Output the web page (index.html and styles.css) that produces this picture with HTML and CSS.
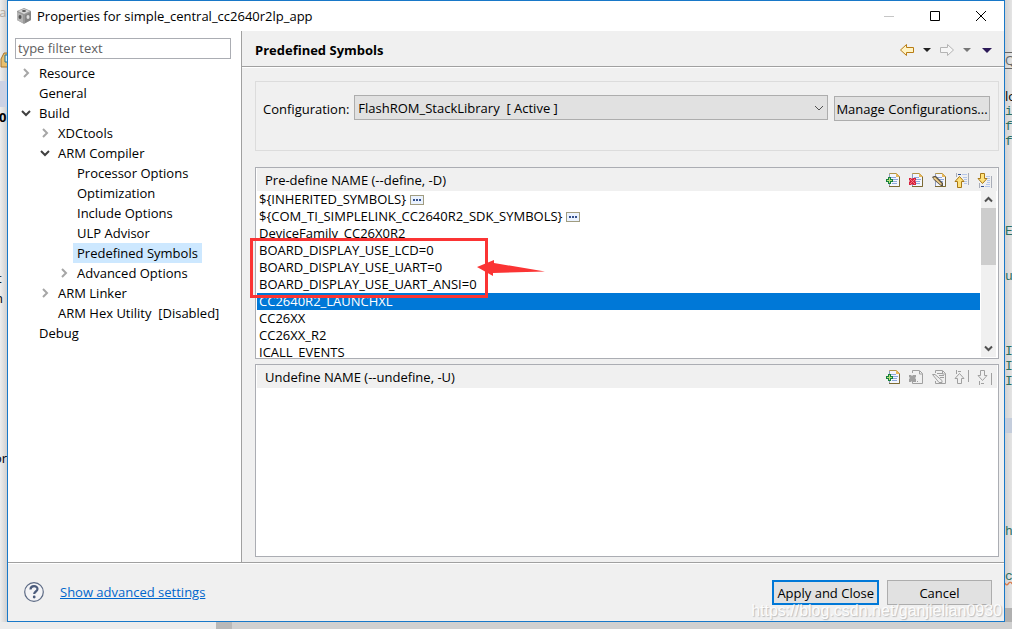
FILE: index.html
```
<!DOCTYPE html>
<html lang="en">
<head>
<meta charset="utf-8">
<title>Properties for simple_central_cc2640r2lp_app</title>
<link rel="stylesheet" href="styles.css">
</head>
<body>
<svg class="defs" aria-hidden="true">
  <defs>
    <symbol id="page" viewBox="0 0 16 16">
      <path d="M4.500 1.500h7l3 3v10h-10z" fill="#f4f6fc" stroke="#b09448"/>
      <path d="M4 14.500h10.500v-10" fill="none" stroke="#7b6a34"/>
      <path d="M4.500 2v12" stroke="#8f9cc0"/>
      <path d="M11 1v4h4z" fill="#e8b85c"/>
      <path d="M6 5.500h5M7 7.500h6M6 9.500h6M7 11.500h5" stroke="#8ea8dc"/>
    </symbol>
    <symbol id="page-off" viewBox="0 0 16 16">
      <path d="M4.500 4v-2.500h7l3 3v10h-10v-2.500M11.500 2v3h3" fill="none" stroke="#a0a0a0"/>
    </symbol>
    <symbol id="add" viewBox="0 0 16 16">
      <use href="#page"/>
      <path d="M3 5h3v2h2v3h-2v2h-3v-2h-2v-3h2z" fill="#16803c"/>
      <path d="M4.500 6v5M2 8.500h5" stroke="#b5e07c"/>
    </symbol>
    <symbol id="delete" viewBox="0 0 16 16">
      <use href="#page"/>
      <path d="M1 6h2l1 1 1-1h3v2l-1 1 1 1v3h-3l-1-1-1 1h-2v-3l1-1-1-1z" fill="#d8203c"/>
      <path d="M2 7l5 5M7 7l-5 5" stroke="#f47884"/>
    </symbol>
    <symbol id="edit" viewBox="0 0 16 16">
      <use href="#page"/>
      <path d="M1 5l2-1h2l7 7v3h-2l-7-6z" fill="#5c5444"/>
      <path d="M2 6l2-1 7 7-1 1z" fill="#f0cf8c"/>
    </symbol>
    <symbol id="up" viewBox="0 0 16 16">
      <path d="M2.500 1v4M14.500 1v12" stroke="#a9adb8"/>
      <path d="M4 2.500h3" stroke="#304c90"/>
      <path d="M8 2.500h5M9 5.500h4M10 7.500h3M10 9.500h3M10 11.500h3" stroke="#b4c6ea"/>
      <path d="M5.500 4.500l4.500 5h-2.500v6h-4v-6h-2.500z" fill="#ffe27c" stroke="#a97816"/>
    </symbol>
    <symbol id="down" viewBox="0 0 16 16">
      <path d="M2.500 11v5M14.500 4v12" stroke="#a9adb8"/>
      <path d="M4 14.500h3" stroke="#304c90"/>
      <path d="M9 4.500h4M10 6.500h3M10 8.500h3M10 10.500h3M8 14.500h5M9 12.500h4" stroke="#b4c6ea"/>
      <path d="M3.500 1.500h4v5h2.500l-4.500 5-4.500-5h2.500z" fill="#ffe27c" stroke="#a97816"/>
    </symbol>
    <symbol id="delete-off" viewBox="0 0 16 16">
      <use href="#page-off"/>
      <path d="M1 6h2l1 1 1-1h3v2l-1 1 1 1v3h-3l-1-1-1 1h-2v-3l1-1-1-1z" fill="#a0a0a0"/>
      <path d="M9 12.500h1" stroke="#a0a0a0"/>
    </symbol>
    <symbol id="edit-off" viewBox="0 0 16 16">
      <use href="#page-off"/>
      <path d="M1.500 5.500h2.500l7 6v2h-3zM6 4.500h5M8 6.500h5M9 8.500h4" fill="none" stroke="#a0a0a0"/>
    </symbol>
    <symbol id="up-off" viewBox="0 0 16 16">
      <path d="M2.500 1v4M4 2.500h3M14.500 1v12M5.500 4.500l4.500 5h-2.500v5h-4v-5h-2.500z" fill="none" stroke="#a0a0a0"/>
    </symbol>
    <symbol id="down-off" viewBox="0 0 16 16">
      <path d="M2.500 12v4M4 14.500h3M14.500 4v12M3.500 1.500h4v5h2.500l-4.500 5-4.500-5h2.500z" fill="none" stroke="#a0a0a0"/>
    </symbol>
    <symbol id="closed" viewBox="0 0 12 12"><path d="M4 2l4 4-4 4" fill="none" stroke="#a6a6a6" stroke-width="2"/></symbol>
    <symbol id="open" viewBox="0 0 12 12"><path d="M2 4l4 4 4-4" fill="none" stroke="#404040" stroke-width="2"/></symbol>
    <symbol id="dots" viewBox="0 0 14 10">
      <rect x="0.500" y="0.500" width="13" height="9" fill="#eaf2fe" stroke="#a09c80"/>
      <path d="M3 5h2M6 5h2M9 5h2" stroke="#34508c" stroke-width="2"/>
    </symbol>
  </defs>
</svg>

<div class="desktop">
  <div class="behind behind-left" aria-hidden="true">
    <span class="fragment ra">ra</span>
    <svg class="fragment tool" viewBox="0 0 8 16"><path d="M8 1h-4l-3 6v8h7z" fill="#e8c070" stroke="#a8742c"/><path d="M8 3h-3v7h3" fill="#d8f0f4" stroke="#28708c"/></svg>
    <span class="fragment tab"></span>
    <b class="fragment zero">0</b>
    <span class="fragment t1">t</span>
    <span class="fragment t2">n</span>
    <span class="fragment t3">or</span>
  </div>

  <main class="dialog">
    <header class="titlebar">
      <svg class="app-icon" viewBox="0 0 16 16">
        <path d="M8 0l7 3v9l-7 4-7-4V3z" fill="#999"/>
        <path d="M8 1l6 2-6 3-6-3z" fill="#d6d6d6"/>
        <path d="M1 4l6 3v8l-6-3z" fill="#b4b4b4"/>
        <path d="M15 4L9 7v8l6-3z" fill="#848484"/>
        <ellipse cx="8" cy="3" rx="2" ry="1" fill="#555"/>
        <ellipse cx="4" cy="9" rx="1.500" ry="2" fill="#555"/>
        <ellipse cx="12" cy="9" rx="1.500" ry="2" fill="#ddd"/>
      </svg>
      <h1 class="title">Properties for simple_central_cc2640r2lp_app</h1>
      <div class="window-buttons">
        <button class="window-button" aria-label="Minimize" disabled><svg viewBox="0 0 12 12"><path d="M1 6.500h10" stroke="#c6c6c6"/></svg></button>
        <button class="window-button" aria-label="Maximize"><svg viewBox="0 0 12 12"><path d="M1.500 1.500h9v9h-9z" fill="none" stroke="#000"/></svg></button>
        <button class="window-button" aria-label="Close"><svg viewBox="0 0 12 12"><path d="M1 1l10 10M11 1L1 11" stroke="#000"/></svg></button>
      </div>
    </header>

    <div class="content">
      <nav class="sidebar">
        <input class="filter" type="text" placeholder="type filter text" aria-label="type filter text">
        <ul class="tree">
          <li class="node"><svg class="twisty"><use href="#closed"/></svg><span class="label">Resource</span></li>
          <li class="node"><span class="twisty"></span><span class="label">General</span></li>
          <li class="node"><svg class="twisty"><use href="#open"/></svg><span class="label">Build</span></li>
          <li class="node level-2"><svg class="twisty"><use href="#closed"/></svg><span class="label">XDCtools</span></li>
          <li class="node level-2"><svg class="twisty"><use href="#open"/></svg><span class="label">ARM Compiler</span></li>
          <li class="node level-3"><span class="twisty"></span><span class="label">Processor Options</span></li>
          <li class="node level-3"><span class="twisty"></span><span class="label">Optimization</span></li>
          <li class="node level-3"><span class="twisty"></span><span class="label">Include Options</span></li>
          <li class="node level-3"><span class="twisty"></span><span class="label">ULP Advisor</span></li>
          <li class="node level-3"><span class="twisty"></span><span class="label current">Predefined Symbols</span></li>
          <li class="node level-3"><svg class="twisty"><use href="#closed"/></svg><span class="label">Advanced Options</span></li>
          <li class="node level-2"><svg class="twisty"><use href="#closed"/></svg><span class="label">ARM Linker</span></li>
          <li class="node level-2"><span class="twisty"></span><span class="label">ARM Hex Utility&nbsp; [Disabled]</span></li>
          <li class="node"><span class="twisty"></span><span class="label">Debug</span></li>
        </ul>
      </nav>

      <section class="page">
        <header class="page-header">
          <h2 class="page-title">Predefined Symbols</h2>
          <div class="history">
            <button class="icon-button" aria-label="Back"><svg class="arrow" viewBox="0 0 16 14"><path d="M1.500 7l6-5.500v3h7v5h-7v3z" fill="#fff3c4" stroke="#b87c14"/></svg></button>
            <button class="icon-button" aria-label="Back history"><svg class="caret" viewBox="0 0 8 4"><path d="M0 0h8L4 4z" fill="#222"/></svg></button>
            <button class="icon-button" aria-label="Forward" disabled><svg class="arrow" viewBox="0 0 16 14"><path d="M14.500 7l-6-5.500v3h-7v5h7v3z" fill="#f6f6f6" stroke="#b4b4b4"/></svg></button>
            <button class="icon-button" aria-label="Forward history" disabled><svg class="caret" viewBox="0 0 8 4"><path d="M0 0h8L4 4z" fill="#777"/></svg></button>
            <button class="icon-button menu" aria-label="Menu"><svg class="caret wide" viewBox="0 0 10 5"><path d="M0 0h10L5 5z" fill="#2c1a58"/></svg></button>
          </div>
        </header>

        <div class="page-body">
          <div class="configuration">
            <label class="config-label" for="config">Configuration:</label>
            <div class="combo">
              <select id="config" class="select"><option>FlashROM_StackLibrary&nbsp; [ Active ]</option></select>
              <svg class="chevron" viewBox="0 0 10 6"><path d="M1 1l4 4 4-4" fill="none" stroke="#505050"/></svg>
            </div>
            <button class="button manage">Manage Configurations...</button>
          </div>

          <div class="panels">
            <section class="panel">
              <header class="panel-header">
                <h3 class="panel-title">Pre-define NAME (--define, -D)</h3>
                <div class="tools">
                  <button class="icon-button" aria-label="Add"><svg class="icon"><use href="#add"/></svg></button>
                  <button class="icon-button" aria-label="Delete"><svg class="icon"><use href="#delete"/></svg></button>
                  <button class="icon-button" aria-label="Edit"><svg class="icon"><use href="#edit"/></svg></button>
                  <button class="icon-button" aria-label="Move up"><svg class="icon"><use href="#up"/></svg></button>
                  <button class="icon-button" aria-label="Move down"><svg class="icon"><use href="#down"/></svg></button>
                </div>
              </header>
              <div class="list-area">
                <ul class="symbols">
                  <li class="symbol">${INHERITED_SYMBOLS}<svg class="dots"><use href="#dots"/></svg></li>
                  <li class="symbol">${COM_TI_SIMPLELINK_CC2640R2_SDK_SYMBOLS}<svg class="dots"><use href="#dots"/></svg></li>
                  <li class="symbol">DeviceFamily_CC26X0R2</li>
                  <li class="symbol">BOARD_DISPLAY_USE_LCD=0</li>
                  <li class="symbol">BOARD_DISPLAY_USE_UART=0</li>
                  <li class="symbol">BOARD_DISPLAY_USE_UART_ANSI=0</li>
                  <li class="symbol selected">CC2640R2_LAUNCHXL</li>
                  <li class="symbol">CC26XX</li>
                  <li class="symbol">CC26XX_R2</li>
                  <li class="symbol">ICALL_EVENTS</li>
                </ul>
                <div class="scrollbar">
                  <svg class="scroll-arrow" viewBox="0 0 15 17"><path d="M4 10.500l3.500-3.500 3.500 3.500" fill="none" stroke="#505050" stroke-width="2"/></svg>
                  <div class="thumb"></div>
                  <svg class="scroll-arrow" viewBox="0 0 15 17"><path d="M4 6.500l3.500 3.500 3.500-3.500" fill="none" stroke="#505050" stroke-width="2"/></svg>
                </div>
              </div>
              <div class="mark" aria-hidden="true"></div>
              <svg class="pointer" viewBox="0 0 68 17" aria-hidden="true"><path d="M0 7L17 0V3L68 11.500 16 13V16z" fill="#fb3434"/></svg>
            </section>

            <section class="panel">
              <header class="panel-header">
                <h3 class="panel-title">Undefine NAME (--undefine, -U)</h3>
                <div class="tools">
                  <button class="icon-button" aria-label="Add"><svg class="icon"><use href="#add"/></svg></button>
                  <button class="icon-button" aria-label="Delete" disabled><svg class="icon"><use href="#delete-off"/></svg></button>
                  <button class="icon-button" aria-label="Edit" disabled><svg class="icon"><use href="#edit-off"/></svg></button>
                  <button class="icon-button" aria-label="Move up" disabled><svg class="icon"><use href="#up-off"/></svg></button>
                  <button class="icon-button" aria-label="Move down" disabled><svg class="icon"><use href="#down-off"/></svg></button>
                </div>
              </header>
            </section>
          </div>
        </div>
      </section>
    </div>

    <footer class="footer">
      <div class="help-links">
        <button class="icon-button" aria-label="Help"><svg class="help" viewBox="0 0 20 20"><circle cx="10" cy="10" r="9.300" fill="#f4f4f6" stroke="#5c6a84" stroke-width="1.200"/><path d="M6.500 7.500c0-4.500 7-4.500 7-.5 0 2.500-3.300 2.500-3.300 5" fill="none" stroke="#4c5c7c" stroke-width="2.200"/><circle cx="10.200" cy="15" r="1.400" fill="#4c5c7c"/></svg></button>
        <a class="link" href="#">Show advanced settings</a>
      </div>
      <div class="actions">
        <button class="button primary">Apply and Close</button>
        <button class="button">Cancel</button>
      </div>
    </footer>
  </main>

  <div class="behind behind-right" aria-hidden="true">
    <span class="fragment search">Q</span>
    <span class="fragment r1">lo</span>
    <span class="fragment code r2">i</span>
    <span class="fragment code r3">f</span>
    <span class="fragment code r4">f</span>
    <span class="fragment code r5">E</span>
    <span class="fragment code r6">u</span>
    <span class="fragment code r7">I</span>
    <span class="fragment code r8">I</span>
    <span class="fragment code r9">I</span>
    <span class="fragment line"></span>
    <span class="fragment code r10">h</span>
    <span class="fragment code r11">c</span>
    <span class="fragment bottom"></span>
  </div>
  <div class="behind below" aria-hidden="true"></div>
  <div class="watermark">https://blog.csdn.net/ganjielian0930</div>
</div>
</body>
</html>
```
FILE: styles.css
```
* { box-sizing: border-box; }

body {
  margin: 0;
  background: #e4e4e4;
  color: #000;
  font: 13px/20px "Open Sans", "Noto Sans CJK SC", sans-serif;
}

h1, h2, h3, ul { margin: 0; padding: 0; font: inherit; list-style: none; }
button, input, select { font: inherit; color: inherit; }
svg { display: block; flex: none; }
.defs { position: absolute; width: 0; height: 0; }

.desktop {
  position: relative;
  display: grid;
  grid-template-columns: 7px minmax(0, 1fr) 7px;
  grid-template-rows: minmax(0, 1fr) 7px;
  height: 100vh;
  overflow: hidden;
}

/* Editor window showing around the dialog */
.behind { position: relative; overflow: hidden; }
.behind-left { background: linear-gradient(90deg, #eee, #d0d0d0); }
.behind-right { background: linear-gradient(90deg, #d2d2d2, #e4e4e4); }
.below { grid-column: 1 / -1; background: linear-gradient(90deg, #ececec 216px, #b8b8b8 216px, #b8b8b8 232px, #d0d0d0 232px); }
.fragment { position: absolute; left: 0; line-height: 15px; }
.code { color: #2c7060; font-family: "Liberation Mono", monospace; }
.ra { top: 5px; color: #b0a8a0; left: -6px; }
.tool { top: 52px; width: 8px; height: 16px; }
.tab { top: 81px; width: 8px; height: 26px; background: #ccd2e4; }
.zero { top: 110px; left: -1px; }
.t1 { top: 271px; left: -3px; }
.t2 { top: 291px; left: -5px; }
.t3 { top: 451px; left: -6px; }
.search { top: 52px; border-top: 1px solid #666; border-bottom: 1px solid #666; color: #666; }
.r1 { top: 89px; }
.r2 { top: 104px; }
.r3 { top: 119px; }
.r4 { top: 134px; }
.r5 { top: 224px; }
.r6 { top: 269px; }
.r7 { top: 344px; }
.r8 { top: 359px; }
.r9 { top: 374px; }
.line { top: 418px; width: 7px; height: 15px; background: #c4cddc; }
.r10 { top: 524px; }
.r11 { top: 569px; text-decoration: underline wavy #d87848; }
.bottom { top: 608px; width: 7px; height: 14px; background: #b0b0b0; }

.dialog {
  display: flex;
  flex-direction: column;
  border: 1px solid #1878c8;
  background: #f0f0f0;
}

.titlebar { display: flex; align-items: center; height: 30px; padding-left: 8px; background: #fff; }
.app-icon { width: 16px; height: 16px; }
.title { flex: 1; padding-left: 5px; }
.window-buttons { display: flex; }
.window-button { display: grid; place-items: center; width: 46px; height: 30px; padding: 0; border: 0; background: none; }
.window-button svg { width: 12px; height: 12px; }

.content { display: flex; flex: 1; min-height: 0; border-bottom: 1px solid #a0a0a0; }
.sidebar { flex: none; width: 234px; padding: 7px 10px 0 7px; border-right: 1px solid #a0a0a0; background: #fff; }
.filter { display: block; width: 100%; height: 21px; padding: 0 2px 1px; border: 1px solid #abadb3; background: #fff; }
.filter::placeholder { color: #606060; opacity: 1; }
.tree { padding-top: 4px; }
.node { display: flex; align-items: center; height: 20px; padding-left: 5px; white-space: pre; }
.level-2 { padding-left: 24px; }
.level-3 { padding-left: 43px; }
.twisty { width: 12px; height: 12px; }
.label { margin-left: 3px; padding: 0 4px; }
.current { background: #cde8ff; }

.page { display: flex; flex: 1; flex-direction: column; min-width: 0; }
.page-header { display: flex; align-items: center; height: 36px; padding: 3px 12px 0 13px; border-bottom: 1px solid #a0a0a0; }
.page-title { flex: 1; font-weight: bold; }
.history { display: flex; align-items: center; gap: 8px; }
.icon-button { padding: 0; border: 0; background: none; }
.arrow { width: 16px; height: 14px; }
.caret { width: 8px; height: 4px; }
.wide { width: 10px; height: 5px; }
.menu { padding-left: 3px; }

.page-body { display: flex; flex: 1; flex-direction: column; gap: 16px; min-height: 0; padding: 13px 5px 5px 13px; border-top: 1px solid #fff; }
.configuration { display: flex; align-items: flex-start; height: 70px; padding: 13px 8px 0 7px; border: 1px solid #dcdcdc; }
.config-label { padding: 4px 5px 0 0; }
.combo { position: relative; flex: 1; }
.select { display: block; width: 100%; height: 25px; padding: 0 3px; border: 1px solid #adadad; border-radius: 0; background: #e1e1e1; appearance: none; }
.chevron { position: absolute; top: 10px; right: 4px; width: 10px; height: 6px; }
.button { min-width: 105px; height: 25px; padding: 0 4px; border: 1px solid #adadad; background: #e1e1e1; line-height: 20px; white-space: nowrap; }
.manage { width: 156px; margin: 1px 0 0 6px; padding: 0; }

.panels { display: grid; flex: 1; grid-template-rows: 192fr 193fr; gap: 5px; min-height: 0; }
.panel { position: relative; display: flex; flex-direction: column; min-height: 0; border: 1px solid #abadb3; background: #fff; }
.panel-header { display: flex; align-items: center; height: 23px; margin: 0 1px; padding: 0 4px 0 8px; background: #f0f0f0; }
.panel-title { flex: 1; }
.tools { display: flex; gap: 7px; }
.icon { width: 16px; height: 16px; }

.list-area { display: flex; flex: 1; min-height: 0; padding: 0 2px 1px 1px; }
.symbols { flex: 1; overflow: hidden; }
.symbol { display: flex; align-items: center; gap: 4px; height: 17px; padding-left: 2px; line-height: 17px; }
.selected { background: #0078d7; color: #fff; }
.dots { width: 14px; height: 10px; }
.scrollbar { display: flex; flex-direction: column; width: 15px; margin-left: 1px; background: #f0f0f0; }
.scroll-arrow { width: 15px; height: 17px; }
.thumb { flex: none; height: 57px; margin-bottom: auto; background: #cdcdcd; }

/* Annotation over the list */
.mark { position: absolute; top: 70px; left: -6px; width: 238px; height: 60px; border: 3px solid #fb3434; }
.pointer { position: absolute; top: 92px; left: 221px; width: 68px; height: 17px; }

.footer { display: flex; align-items: center; height: 58px; padding: 0 12px 0 16px; border-top: 1px solid #fff; }
.help-links { display: flex; flex: 1; align-items: center; gap: 16px; padding-bottom: 2px; }
.help { width: 20px; height: 20px; }
.link { color: #0066cc; }
.actions { display: flex; gap: 8px; }
.primary { border: 2px solid #0078d7; padding: 0 3px; }

.watermark { position: absolute; right: 10px; bottom: 8px; color: #fff; font: 16px/20px "Liberation Sans", sans-serif; text-shadow: 1px 1px 1px #b0b0b0; opacity: 0.8; }
```
